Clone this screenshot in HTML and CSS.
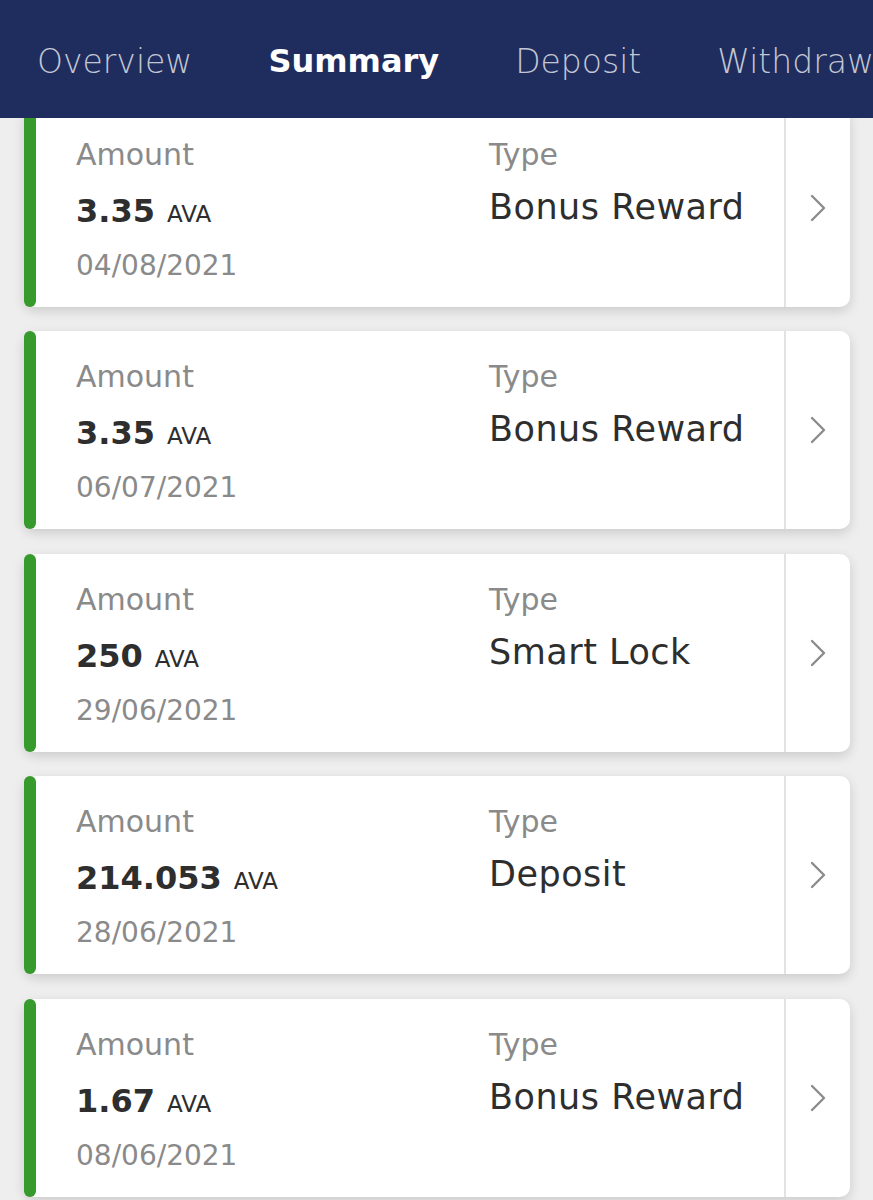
FILE: index.html
```html
<!DOCTYPE html>
<html lang="en">
<head>
  <meta charset="UTF-8">
  <meta name="viewport" content="width=device-width, initial-scale=1.0">
  <title>Summary</title>
  <link rel="stylesheet" href="styles.css">
</head>
<body>
  <header class="topbar">
    <nav class="tabs">
      <a class="tab">Overview</a>
      <a class="tab active">Summary</a>
      <a class="tab">Deposit</a>
      <a class="tab">Withdraw</a>
    </nav>
  </header>

  <main class="list">
    <div class="card">
      <div class="card-body">
        <div class="col">
          <div class="label">Amount</div>
          <div class="value">3.35<span class="unit">AVA</span></div>
          <div class="date">04/08/2021</div>
        </div>
        <div class="col">
          <div class="label">Type</div>
          <div class="type">Bonus Reward</div>
        </div>
      </div>
      <div class="card-arrow">
        <svg width="16" height="28" viewBox="0 0 16 28"><polyline points="2,2 14,14 2,26" /></svg>
      </div>
    </div>

    <div class="card">
      <div class="card-body">
        <div class="col">
          <div class="label">Amount</div>
          <div class="value">3.35<span class="unit">AVA</span></div>
          <div class="date">06/07/2021</div>
        </div>
        <div class="col">
          <div class="label">Type</div>
          <div class="type">Bonus Reward</div>
        </div>
      </div>
      <div class="card-arrow">
        <svg width="16" height="28" viewBox="0 0 16 28"><polyline points="2,2 14,14 2,26" /></svg>
      </div>
    </div>

    <div class="card">
      <div class="card-body">
        <div class="col">
          <div class="label">Amount</div>
          <div class="value">250<span class="unit">AVA</span></div>
          <div class="date">29/06/2021</div>
        </div>
        <div class="col">
          <div class="label">Type</div>
          <div class="type">Smart Lock</div>
        </div>
      </div>
      <div class="card-arrow">
        <svg width="16" height="28" viewBox="0 0 16 28"><polyline points="2,2 14,14 2,26" /></svg>
      </div>
    </div>

    <div class="card">
      <div class="card-body">
        <div class="col">
          <div class="label">Amount</div>
          <div class="value">214.053<span class="unit">AVA</span></div>
          <div class="date">28/06/2021</div>
        </div>
        <div class="col">
          <div class="label">Type</div>
          <div class="type">Deposit</div>
        </div>
      </div>
      <div class="card-arrow">
        <svg width="16" height="28" viewBox="0 0 16 28"><polyline points="2,2 14,14 2,26" /></svg>
      </div>
    </div>

    <div class="card">
      <div class="card-body">
        <div class="col">
          <div class="label">Amount</div>
          <div class="value">1.67<span class="unit">AVA</span></div>
          <div class="date">08/06/2021</div>
        </div>
        <div class="col">
          <div class="label">Type</div>
          <div class="type">Bonus Reward</div>
        </div>
      </div>
      <div class="card-arrow">
        <svg width="16" height="28" viewBox="0 0 16 28"><polyline points="2,2 14,14 2,26" /></svg>
      </div>
    </div>
  </main>
</body>
</html>
```

FILE: styles.css
```css
:root {
  --navy: #1f2d5e;
  --green: #379a2c;
  --muted: #8a8a8a;
  --text: #2e2e2e;
  --page-bg: #eeeeee;
}

body {
  font-family: "DejaVu Sans", sans-serif;
  background-color: var(--page-bg);
  margin: 0;
  padding: 0;
}

/* Barra superior con pestañas */
.topbar {
  position: fixed;
  top: 0;
  left: 0;
  right: 0;
  height: 118px;
  background-color: var(--navy);
  z-index: 10;
  overflow: hidden;
}

.tabs {
  display: flex;
  align-items: center;
  gap: 76px;
  height: 100%;
  padding: 4px 0 0 37px;
  box-sizing: border-box;
  white-space: nowrap;
}

.tab {
  font-size: 33px;
  font-weight: 200;
  color: #c3c7d3;
}

.tab.active {
  font-size: 32px;
  font-weight: bold;
  color: #fff;
}

/* Lista de movimientos */
.list {
  display: flex;
  flex-direction: column;
  gap: 24.5px;
  padding: 108.5px 23px 20px 24px;
}

.card {
  position: relative;
  display: flex;
  background-color: #fff;
  border-radius: 10px;
  box-shadow: 0 4px 12px rgba(0, 0, 0, 0.15);
}

.card::before {
  content: "";
  position: absolute;
  top: 0;
  bottom: 0;
  left: 0;
  width: 12px;
  background-color: var(--green);
  border-radius: 6px;
}

.card-body {
  flex: 1;
  display: grid;
  grid-template-columns: 413px 1fr;
  padding: 28px 0 23px 52px;
}

.label {
  font-size: 30px;
  line-height: 36px;
  color: var(--muted);
}

.value {
  margin-top: 14px;
  font-size: 32px;
  line-height: 48px;
  font-weight: bold;
  color: var(--text);
}

.unit {
  margin-left: 12px;
  font-size: 23px;
  line-height: 20px;
  font-weight: normal;
}

.date {
  margin-top: 13px;
  font-size: 28px;
  line-height: 36px;
  color: var(--muted);
}

.type {
  margin-top: 10px;
  font-size: 35px;
  line-height: 48px;
  letter-spacing: 0.5px;
  color: var(--text);
}

.card-arrow {
  width: 64px;
  border-left: 2px solid #e2e2e2;
  display: flex;
  align-items: center;
  justify-content: center;
}

.card-arrow svg {
  fill: none;
  stroke: #8c8c8c;
  stroke-width: 2.4;
  stroke-linecap: round;
  stroke-linejoin: round;
}
```
